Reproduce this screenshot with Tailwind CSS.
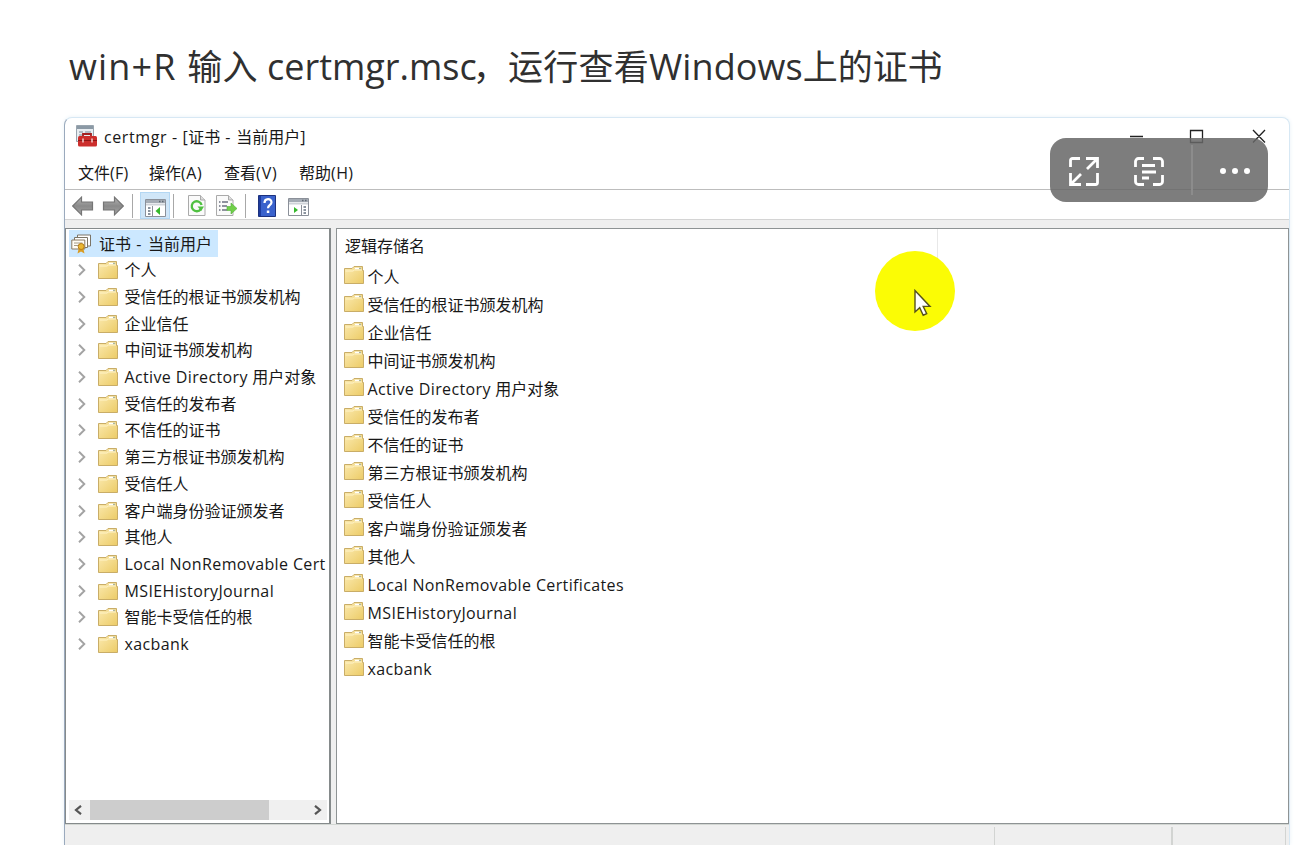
<!DOCTYPE html>
<html lang="zh-CN">
<head>
<meta charset="utf-8">
<title>certmgr</title>
<script src="https://cdn.jsdelivr.net/npm/@tailwindcss/browser@4"></script>
</head>
<body class="relative h-[845px] w-[1313px] overflow-hidden bg-white font-['Open_Sans','Noto_Sans_CJK_SC',sans-serif] text-[#181818]">
<svg class="absolute size-0">
  <defs>
    <linearGradient id="fg" x1="0" y1="0" x2="1" y2="1"><stop offset="0" stop-color="#fbeab0"/><stop offset="1" stop-color="#eccb66"/></linearGradient>
    <linearGradient id="ag" x1="0" y1="0" x2="0" y2="1"><stop offset="0" stop-color="#b5b5b5"/><stop offset=".5" stop-color="#8a8a8a"/><stop offset="1" stop-color="#a5a5a5"/></linearGradient>
    <symbol id="folder" viewBox="0 0 20 18"><path d="M.5 2.500H8L10 .5h8.500v4h1v13H.5z" fill="url(#fg)" stroke="#c9ad67"/><path d="M11 2.500h6" stroke="#fff" stroke-width="1.500"/><path d="M15 2.500h2" stroke="#a9b5a0" stroke-width="1.500"/><path d="M1.500 5H9l1.500-1H18" stroke="#fff3c7" fill="none"/></symbol>
    <symbol id="chev" viewBox="0 0 8 12"><path d="M1 .8L6.300 6 1 11.200" fill="none" stroke="#a3a3a3" stroke-width="1.900"/></symbol>
    <symbol id="back" viewBox="0 0 22 20"><path d="M.7 10L9.500 1.200V6H20.500v8H9.500v4.800z" fill="url(#ag)" stroke="#757575" stroke-width="1.200"/></symbol>
    <symbol id="page" viewBox="0 0 18 21"><path d="M.5.5H12.500l4.500 4.500V20.500H.5z" fill="#fafafa" stroke="#aaa"/><path d="M12.500.5V5H17" fill="#ddd" stroke="#aaa"/></symbol>
    <symbol id="panel" viewBox="0 0 21 18"><path d="M.5.5h20v17H.5z" fill="#fff" stroke="#8b9099"/><path d="M1 1h19v3H1z" fill="#a4abb4"/><path d="M14 2.500h1.500M17 2.500h1.500" stroke="#5f6872" stroke-width="1.500"/><path d="M1 5.500h19" stroke="#cfd3d8" stroke-width="2"/><path d="M7.500 7v10.500" stroke="#8b9099"/><path d="M3 9h2.500M3 12h2.500M3 15h2.500" stroke="#657180" stroke-width="1.500"/><path d="M15 8v8l-4.500-4z" fill="#35b82b"/></symbol>
  </defs>
</svg>

<h1 class="flex h-[117px] items-start whitespace-pre pl-[69px] pt-[43px] text-[35px] leading-[48px] tracking-[0.25px] text-[#303030]"><span class="text-[36px] tracking-[1.15px]">win+R </span><span>输入 </span><span class="text-[36px] tracking-normal">certmgr.msc</span><span class="-ml-[4px]">，运行查看</span><span class="text-[36px] tracking-[0.1px]">Windows</span><span class="tracking-[-0.1px]">上的证书</span></h1>

<main class="ml-16 flex h-[728px] w-[1226px] flex-col rounded-t-lg border border-b-0 border-[#d7e8f4] border-l-[#9aaabd] bg-white shadow-[0_0_4px_#e8f1f7]">
  <header class="flex h-[37px] items-center">
    <svg class="mb-px ml-[11px] h-[22px] w-[21px]" viewBox="0 0 21 22"><path d="M.5.5h17v16H.5z" fill="#e8edf1" stroke="#99a5af"/><path d="M1 1h16v3H1z" fill="#8b99a5"/><path d="M3 7h4M3 10h4M9 7h6" stroke="#9faab5" stroke-width="1.500"/><path d="M7 12V9h8v3" fill="none" stroke="#a52020" stroke-width="1.800"/><rect x="2" y="11" width="19" height="10.500" rx="1.500" fill="#cc2e2c"/><path d="M2 15.500h19" stroke="#8f1515"/><path d="M7 13.500v4M16 13.500v4" stroke="#f2d2cf" stroke-width="1.500"/></svg>
    <span class="ml-[7px] whitespace-pre text-[16px] leading-5"><span class="tracking-[0.6px]">certmgr - [</span>证书<span class="tracking-[0.8px]"> - </span>当前用户]</span>
    <svg class="mb-[2px] ml-auto mr-[22px] h-4 w-[138px]" viewBox="0 0 138 16" fill="none" stroke="#222" stroke-width="1.300"><path d="M1 8.500h13M61.500 2.500h12v12h-12zM124 2l12 12.500M136 2L124 14.500"/></svg>
  </header>
  <nav class="flex h-[35px] items-center border-b border-[#bdbdbd] pl-[13px] pt-[2px] text-[16px] leading-5">
    <span class="w-[71px]">文件<span class="tracking-[0.3px]">(F)</span></span><span class="w-[75px]">操作<span class="tracking-[0.6px]">(A)</span></span><span class="w-[75px]">查看<span class="tracking-[0.9px]">(V)</span></span><span>帮助<span class="tracking-[0.4px]">(H)</span></span>
  </nav>
  <div class="flex h-[29px] items-center pt-[2px]">
    <svg class="ml-[7px] h-5 w-[22px]"><use href="#back"/></svg>
    <svg class="ml-2 h-5 w-[22px] -scale-x-100"><use href="#back"/></svg>
    <i class="ml-2 h-[24px] w-px bg-[#a8a8a8]"></i>
    <span class="ml-[7px] flex h-[27px] w-[30px] items-center justify-center border border-[#b4d7f3] bg-[#d0e6f8]"><svg class="mt-1 h-[18px] w-[21px]"><use href="#panel"/></svg></span>
    <i class="ml-[3px] h-[24px] w-px bg-[#a8a8a8]"></i>
    <svg class="ml-[14px] h-[21px] w-[18px]" viewBox="0 0 18 21"><use href="#page"/><path d="M12.800 14.200A5 5 0 1 1 13.600 10" fill="none" stroke="#4fc040" stroke-width="2.300"/><path d="M9.500 11.500h6.500l-2.800 4.500z" fill="#4fc040"/></svg>
    <svg class="ml-[10px] h-[21px] w-[22px]" viewBox="0 0 22 21"><svg width="18" height="21"><use href="#page"/></svg><path d="M3 7h1.500M3 11h1.500M3 15h1.500M6 7h6M6 11h5M6 15h5" stroke="#6b7080" stroke-width="1.400"/><path d="M11 11.500h4V8l6 5.500-6 5.500v-3.500h-4z" fill="#70cf48" stroke="#4fae38" stroke-width=".6"/></svg>
    <i class="ml-[7px] h-[24px] w-px bg-[#a8a8a8]"></i>
    <svg class="ml-3 h-[22px] w-[18px]" viewBox="0 0 18 22"><path d="M.5.5h17v21H.5z" fill="#3a62cc" stroke="#1d327f"/><path d="M2 1v20" stroke="#1d3b9d" stroke-width="2"/><path d="M6.500 8c0-5 7-5 7-.8 0 3-3.500 3-3.500 6" fill="none" stroke="#fff" stroke-width="2.200"/><path d="M8.800 15.500h2.500V18H8.800z" fill="#fff"/></svg>
    <svg class="ml-3 mt-[3px] h-[18px] w-[21px]" viewBox="0 0 21 18"><path d="M.5.5h20v17H.5z" fill="#fff" stroke="#8b9099"/><path d="M1 1h19v3H1z" fill="#a4abb4"/><path d="M14 2.500h1.500M17 2.500h1.500" stroke="#5f6872" stroke-width="1.500"/><path d="M1 5.500h19" stroke="#cfd3d8" stroke-width="2"/><path d="M13.500 7v10.500" stroke="#8b9099"/><path d="M15.500 9H18M15.500 12H18M15.500 15H18" stroke="#657180" stroke-width="1.500"/><path d="M6 9v6l4-3z" fill="#35b82b"/></svg>
  </div>
  <div class="h-[9px] border-t border-[#d4d4d4] bg-[#efefef]"></div>
  <section class="flex h-[596px] gap-[5px] bg-[#efefef]">
    <aside class="flex w-[266px] flex-col overflow-hidden border border-r-2 border-[#858a8b] bg-white pl-[3px]">
      <div class="mt-[1px] flex h-[27px] w-[149px] shrink-0 items-center bg-[#cce8ff] text-[16px]">
        <svg class="ml-[2px] h-[20px] w-[21px]" viewBox="0 0 21 20"><path d="M6.500 1h13v11h-13z" fill="#fff" stroke="#7c7567"/><path d="M3.500 3.500h13v10h-13z" fill="#fff" stroke="#7c7567"/><path d="M.8 6h13v9H.8z" fill="#fffdf5" stroke="#8a7960"/><path d="M3 9h8.500M3 11.500h5" stroke="#a59a86"/><path d="M8 13l-1.500 6.500 3.500-2 3.500 2L12 13z" fill="#d99c24"/><circle cx="10.200" cy="12.500" r="3" fill="#eab733" stroke="#b67c17"/></svg>
        <span class="ml-[7px] whitespace-pre">证书<span class="tracking-[1.2px]"> - </span>当前用户</span>
      </div>
      <div id="tree" class="text-[16px]"></div>
      <div class="mb-[3px] mt-auto flex h-5 w-[258px] shrink-0 items-center bg-[#f0f0f0]">
        <svg class="ml-[5px] h-[10px] w-2" viewBox="0 0 8 10"><path d="M7 .8L2 5l5 4.200" fill="none" stroke="#555" stroke-width="2.200"/></svg>
        <div class="ml-2 h-5 w-[179px] bg-[#cdcdcd]"></div>
        <svg class="ml-[45px] h-[10px] w-2" viewBox="0 0 8 10"><path d="M1 .8L6 5 1 9.200" fill="none" stroke="#555" stroke-width="2.200"/></svg>
      </div>
    </aside>
    <div class="relative w-[953px] border border-[#8e9394] bg-white pl-2">
      <div class="flex h-[34px] w-[593px] items-center border-r border-[#e8e8e8] text-[16px]">逻辑存储名</div>
      <div id="list" class="-ml-px text-[16px]"></div>
      <div class="absolute left-[538px] top-[22px] size-[80px] rounded-full bg-[#fbfc05]"></div>
      <svg class="absolute left-[577px] top-[60px] h-[28px] w-[18px]" viewBox="0 0 18 28"><path d="M1 1.500V23l4.700-4.300 3.500 7.500 3.500-1.600-3.500-7.200H16z" fill="#fff" stroke="#55511c" stroke-width="1.400"/></svg>
    </div>
  </section>
  <footer class="flex flex-1 border-t border-[#d3d7d3] bg-[#efefef] pt-[2px]"><i class="w-[930px] border-r border-[#d2d4d2]"></i><i class="w-[178px] border-r-2 border-[#d2d4d2]"></i><i class="w-[113px] border-r border-[#d2d4d2]"></i></footer>
</main>

<div class="absolute left-[1050px] top-[138px] flex h-[64px] w-[218px] items-center rounded-[16px] bg-[#666]/85">
  <svg class="ml-[18px] mt-px h-[32px] w-[32px]" viewBox="0 0 32 32" fill="none" stroke="#fff" stroke-width="2.800"><path d="M2.500 12V5.500a2 2 0 0 1 2-2H12M18 3.500h11.500V13M29.500 18v9.500a2 2 0 0 1-2 2H18M2.500 18v11.500H13M28.500 4.500L19 14M3.500 28.500L13 19"/></svg>
  <svg class="ml-[33px] mt-px h-[32px] w-[32px]" viewBox="0 0 32 32" fill="none" stroke="#fff" stroke-width="2.800"><path d="M2.500 12V6.500a3 3 0 0 1 3-3H11M20 3.500h6.500a3 3 0 0 1 3 3V12M29.500 20v6.500a3 3 0 0 1-3 3H20M11 29.500H5.500a3 3 0 0 1-3-3V20M9 10.500h13M9 17h14M9 23h7"/></svg>
  <i class="ml-[26px] h-[50px] w-[2px] bg-[#8c8c8c]"></i>
  <svg class="ml-[26px] mt-[2px] h-[8px] w-[32px]" viewBox="0 0 32 8" fill="#fff"><circle cx="4" cy="4" r="3"/><circle cx="16" cy="4" r="3"/><circle cx="28" cy="4" r="3"/></svg>
</div>

<script>
const stores = ['个人','受信任的根证书颁发机构','企业信任','中间证书颁发机构','Active Directory 用户对象','受信任的发布者','不信任的证书','第三方根证书颁发机构','受信任人','客户端身份验证颁发者','其他人','Local NonRemovable Certificates','MSIEHistoryJournal','智能卡受信任的根','xacbank'];
const label = s => s.replace(/[A-Za-z ]+/g, m => `<span class="tracking-[0.37px]">${m}</span>`);
// The narrow tree column has room only for the first part of the longest name.
const treeName = s => s.length > 28 ? s.slice(0, 23) : s;
document.getElementById('tree').innerHTML = stores.map(s => `<div class="flex h-[26.7px] items-center whitespace-nowrap"><svg class="ml-[9px] h-3 w-2 shrink-0"><use href="#chev"/></svg><svg class="ml-3 h-[18px] w-5 shrink-0"><use href="#folder"/></svg><span class="ml-[6.500px]">${label(treeName(s))}</span></div>`).join('');
document.getElementById('list').innerHTML = stores.map(s => `<div class="flex h-[28.02px] items-center whitespace-nowrap"><svg class="mb-[4px] h-[18px] w-5 shrink-0"><use href="#folder"/></svg><span class="ml-[3.500px]">${label(s)}</span></div>`).join('');
</script>
</body>
</html>
